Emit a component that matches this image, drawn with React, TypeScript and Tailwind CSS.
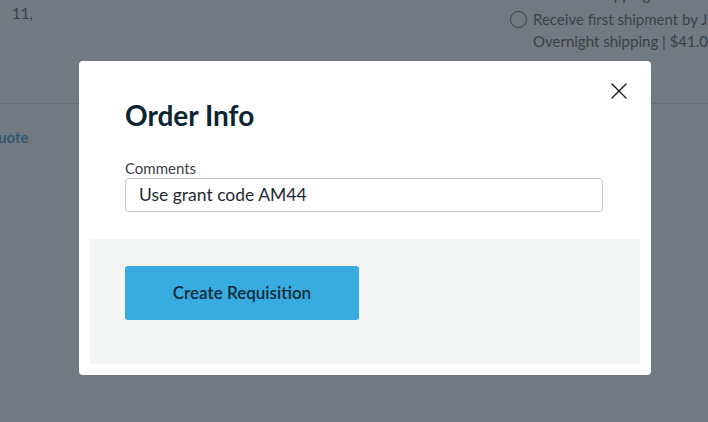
import { X } from 'lucide-react';

export default function App() {
  return (
    <div
      className="relative h-[422px] w-[708px] overflow-hidden bg-[#737981]"
      style={{ fontFamily: 'Lato, "Liberation Sans", sans-serif' }}
    >
      {/* page behind the overlay */}
      <div className="flex h-[104px] justify-between border-b border-[#676d75]">
        <div className="pl-[12px] pt-[2px] text-[15px] text-[#3b4047]">11,</div>
        <div className="-mt-[14px] w-[198px] text-[15px] leading-[22px] text-[#3b4047]">
          <div className="h-[22px] pl-[23px] leading-[16px] whitespace-nowrap">Standard shipping</div>
          <div className="flex items-center gap-[6px] whitespace-nowrap">
            <span className="h-[17px] w-[17px] shrink-0 rounded-full border border-[#3b4047]" />
            Receive first shipment by Jan
          </div>
          <div className="pl-[23px] whitespace-nowrap">Overnight shipping | $41.00</div>
        </div>
      </div>
      <div className="-ml-[14px] pt-[22px] text-[15px] font-bold text-[#2f5873]">Quote</div>

      {/* modal */}
      <div className="absolute left-[79px] top-[61px] flex h-[314px] w-[572px] flex-col rounded-[4px] bg-white px-[11px] pb-[11px]">
        <button className="absolute right-[18px] top-[16px] text-[#1a1a1a]">
          <X size={28} strokeWidth={1.2} />
        </button>
        <div className="px-[35px] pt-[38px]">
          <h2 className="text-[28px] font-bold leading-[32px] text-[#0c2533]">Order Info</h2>
          <label className="mt-[28px] block text-[15px] leading-[18px] text-[#3a4047]">Comments</label>
          <div className="mt-[1px] flex h-[34px] w-[478px] items-center rounded-[4px] border border-[#c3c8cd] px-[13px] text-[17.5px] text-[#1d2a33]">
            Use grant code AM44
          </div>
        </div>
        <div className="mt-[27px] flex-1 rounded-[2px] bg-[#f3f4f4] pl-[35px] pt-[27px]">
          <button className="h-[54px] w-[234px] rounded-[3px] bg-[#38abe0] text-[17px] font-semibold text-[#0f2a3a]">
            Create Requisition
          </button>
        </div>
      </div>
    </div>
  );
}
